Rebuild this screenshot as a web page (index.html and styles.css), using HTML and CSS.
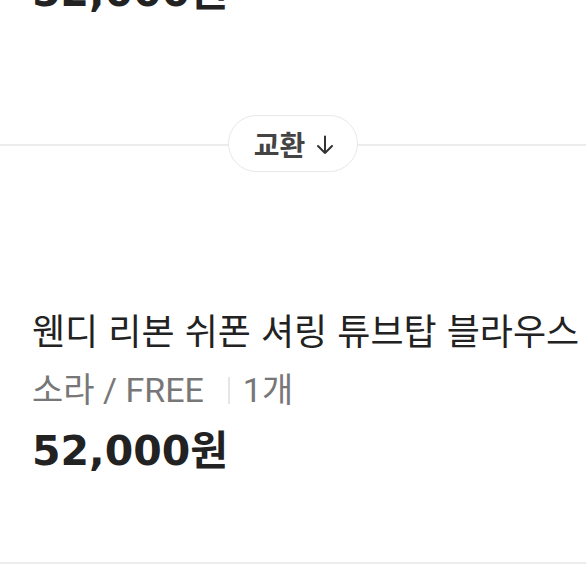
FILE: index.html
```html
<!doctype html>
<html lang="ko">
<head>
    <meta charset="UTF-8">
    <meta name="viewport" content="width=device-width, initial-scale=1.0">
    <title>교환 상품</title>
    <link rel="stylesheet" href="styles.css">
</head>
<body>
    <div class="order">
        <div class="order__prev">
            <p class="order__price">52,000원</p>
        </div>
        <div class="divider">
            <span class="divider__pill">
                교환
                <svg class="divider__arrow" width="18" height="20" viewBox="0 0 18 20">
                    <path d="M9 1.5V18M2 11l7 7 7-7" fill="none" stroke="#333" stroke-width="2" stroke-linecap="round" stroke-linejoin="round"/>
                </svg>
            </span>
        </div>
        <div class="order__item">
            <p class="order__title">웬디 리본 쉬폰 셔링 튜브탑 블라우스</p>
            <p class="order__option">소라 / FREE<span class="order__sep"></span>1개</p>
            <p class="order__price">52,000원</p>
        </div>
    </div>
</body>
</html>
```

FILE: styles.css
```css
*, ::before, ::after {
    padding: 0;
    margin: 0;
    box-sizing: border-box;
    font-family: 'Noto Sans CJK KR', 'Noto Sans', sans-serif;
}
body {
    background: #ffffff;
    color: #222222;
    overflow: hidden;
}
.order {
    display: flex;
    flex-direction: column;
}
.order__prev {
    margin-top: -33px;
    padding: 0 32px;
}
.order__price {
    font-family: 'DejaVu Sans', 'Noto Sans CJK KR', sans-serif;
    font-size: 41px;
    font-weight: 700;
    line-height: 50px;
    color: #222222;
}
.divider {
    display: flex;
    justify-content: center;
    align-items: center;
    height: 57px;
    margin-top: 98px;
    background: linear-gradient(#ececec, #ececec) no-repeat 0 29px / 100% 2px;
}
.divider__pill {
    display: flex;
    align-items: center;
    gap: 11px;
    height: 57px;
    padding: 0 23px 0 25px;
    border: 1.5px solid #e8e8e8;
    border-radius: 29px;
    background: #ffffff;
    font-size: 28px;
    font-weight: 700;
    color: #444444;
}
.divider__arrow {
    margin-top: 2px;
}
.order__item {
    display: flex;
    flex-direction: column;
    padding: 135px 0 86px 32px;
    border-bottom: 2px solid #ececec;
}
.order__title {
    font-size: 36px;
    line-height: 44px;
    white-space: nowrap;
    color: #222222;
}
.order__option {
    display: flex;
    align-items: center;
    margin-top: 19px;
    font-family: Roboto, 'Noto Sans CJK KR', sans-serif;
    font-size: 34px;
    line-height: 40px;
    color: #777777;
}
.order__sep {
    width: 2px;
    height: 27px;
    margin: 0 13px 0 24px;
    background: #e6e6e6;
}
.order__item .order__price {
    margin-top: 16px;
}
```
